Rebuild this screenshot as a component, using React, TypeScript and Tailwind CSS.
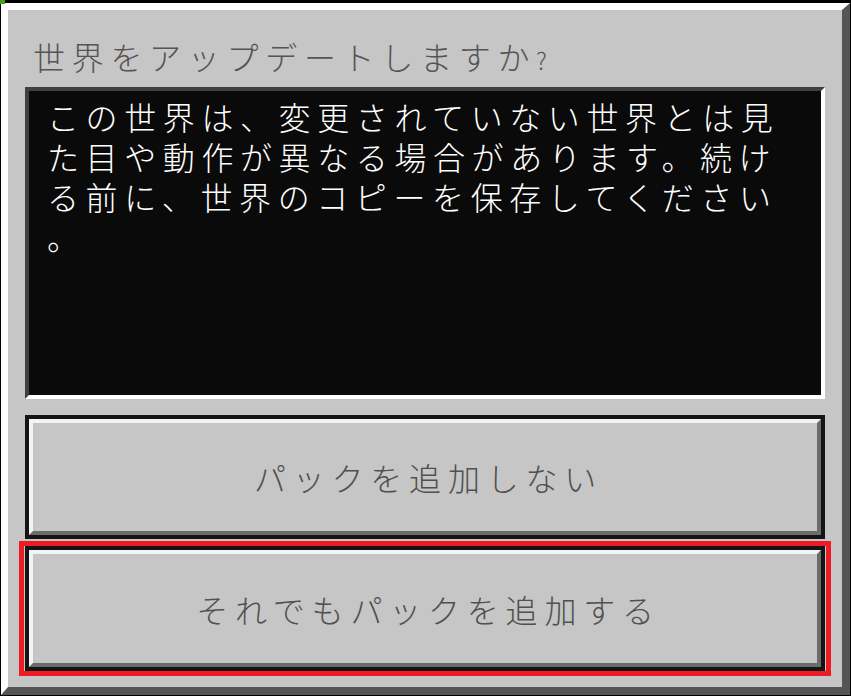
import React from 'react';

const bodyLines = [
  'この世界は、変更されていない世界とは見',
  'た目や動作が異なる場合があります。続け',
  'る前に、世界のコピーを保存してください',
  '。',
];

const font = { fontFamily: '"Noto Sans CJK JP", "Noto Sans", sans-serif' };

const PackButton: React.FC<{ label: string; tall?: boolean }> = ({ label, tall }) => (
  <div className={`border-4 border-[#141414] ${tall ? 'h-[125px]' : 'h-[124px]'}`}>
    <div className="h-full border-4 border-t-[#f4f4f4] border-l-[#f4f4f4] border-r-[#6b6b6b] border-b-[#6b6b6b] bg-[#c6c6c6] flex items-center justify-center pl-[7px]">
      <span className="text-[32px] leading-[40px] tracking-[6.8px] font-light text-[#505050] whitespace-nowrap">
        {label}
      </span>
    </div>
  </div>
);

export default function App() {
  return (
    <div className="w-[851px] h-[696px] bg-black pt-[3px] px-px pb-px relative" style={font}>
      {/* corner pixels */}
      <div className="absolute left-0 top-0 w-[5px] h-[4px] bg-[#4c9a1e]" />

      <div className="h-full border-t-[7px] border-l-[7px] border-r-[8px] border-b-[8px] border-t-white border-l-white border-r-[#555555] border-b-[#555555] bg-[#c6c6c6] px-[17px] flex flex-col">
        {/* title */}
        <div className="h-[77px] pt-[26px] pl-[8px]">
          <h1 className="text-[32px] leading-[40px] tracking-[6.7px] font-light text-[#555555] whitespace-nowrap">
            世界をアップデートしますか<span className="text-[24px] tracking-normal">?</span>
          </h1>
        </div>

        {/* message box */}
        <div className="h-[312px] border-4 border-t-[#404040] border-l-[#404040] border-r-white border-b-white bg-[#0a0a0a] pt-[5px] pl-[18px]">
          {bodyLines.map((line, i) => (
            <p key={i} className="text-[32px] leading-[40px] tracking-[6.6px] font-light text-white whitespace-nowrap">
              {line}
            </p>
          ))}
        </div>

        <div className="mt-[16px]">
          <PackButton label="パックを追加しない" />
        </div>

        {/* selected button */}
        <div className="mt-[2px] -mx-[6px] border-[5px] border-[#ed1c24] px-px">
          <PackButton label="それでもパックを追加する" tall />
        </div>
      </div>
    </div>
  );
}
